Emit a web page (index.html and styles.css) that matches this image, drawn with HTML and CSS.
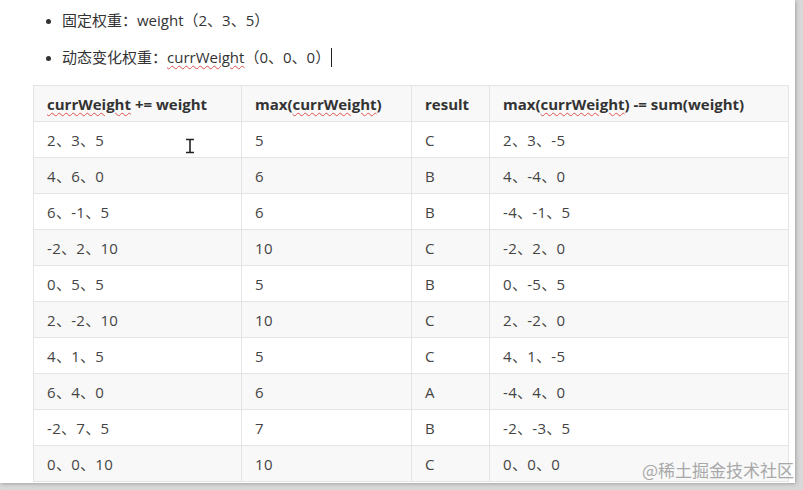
FILE: index.html
```html
<!DOCTYPE html>
<html>
<head>
<meta charset="utf-8">
<link rel="stylesheet" href="styles.css">
</head>
<body>
<div class="page">
  <ul class="list">
    <li>固定权重：weight（2、3、5）</li>
    <li>动态变化权重：<span class="sp">currWeight</span>（0、0、0）<span class="caret"></span></li>
  </ul>
  <table class="tbl">
    <thead>
      <tr><th class="c1"><span class="sp">currWeight</span> += weight</th><th class="c2">max(<span class="sp">currWeight</span>)</th><th class="c3">result</th><th class="c4">max(<span class="sp">currWeight</span>) -= sum(weight)</th></tr>
    </thead>
    <tbody>
      <tr><td>2、3、5</td><td>5</td><td>C</td><td>2、3、-5</td></tr>
      <tr><td>4、6、0</td><td>6</td><td>B</td><td>4、-4、0</td></tr>
      <tr><td>6、-1、5</td><td>6</td><td>B</td><td>-4、-1、5</td></tr>
      <tr><td>-2、2、10</td><td>10</td><td>C</td><td>-2、2、0</td></tr>
      <tr><td>0、5、5</td><td>5</td><td>B</td><td>0、-5、5</td></tr>
      <tr><td>2、-2、10</td><td>10</td><td>C</td><td>2、-2、0</td></tr>
      <tr><td>4、1、5</td><td>5</td><td>C</td><td>4、1、-5</td></tr>
      <tr><td>6、4、0</td><td>6</td><td>A</td><td>-4、4、0</td></tr>
      <tr><td>-2、7、5</td><td>7</td><td>B</td><td>-2、-3、5</td></tr>
      <tr><td>0、0、10</td><td>10</td><td>C</td><td>0、0、0</td></tr>
    </tbody>
  </table>
  <svg class="ibeam" width="10" height="16" viewBox="0 0 10 16"><path d="M1 1.5h8M5 1.5v13M1 14.5h8" stroke="#222" stroke-width="1.6" fill="none"/></svg>
  <div class="wm">@稀土掘金技术社区</div>
</div>
</body>
</html>
```
FILE: styles.css
```css
html, body { margin: 0; padding: 0; }
body {
  width: 803px;
  height: 490px;
  background: #d9d9d9;
  overflow: hidden;
  font-family: "Open Sans", "Noto Sans CJK SC", sans-serif;
  color: #333;
}
.page {
  position: relative;
  width: 795px;
  height: 483px;
  background: #fff;
  box-shadow: 1px 1px 4px rgba(0,0,0,0.25);
}
.list {
  margin: 0;
  padding: 9px 0 0 62px;
  font-size: 15px;
  list-style: disc;
}
.list li {
  height: 22px;
  line-height: 22px;
  margin-bottom: 15px;
}
.list li::marker { font-size: 13px; }
.sp {
  text-decoration: underline wavy #e05050;
  text-decoration-thickness: 1px;
  text-underline-offset: 2px;
}
.caret {
  display: inline-block;
  width: 1px;
  height: 19px;
  background: #222;
  margin-left: 1px;
  vertical-align: -4px;
}
.tbl {
  margin: 17px 0 0 33px;
  border-collapse: collapse;
  width: 755px;
  font-size: 15px;
  table-layout: fixed;
}
.tbl th, .tbl td {
  border: 1px solid #e4e4e4;
  height: 36px;
  padding: 0 0 0 13px;
  text-align: left;
  box-sizing: border-box;
}
.tbl th { font-weight: 700; background: #f8f8f8; }
.c1 { width: 208px; }
.c2 { width: 170px; }
.c3 { width: 78px; }
.c4 { width: 299px; }
.tbl tbody tr:nth-child(even) td { background: #f8f8f8; }
.tbl td { color: #444; letter-spacing: 0.3px; }
.ibeam { position: absolute; left: 185px; top: 138px; }
.wm {
  position: absolute;
  right: 1px;
  bottom: 1px;
  font-family: "Noto Sans CJK SC", sans-serif;
  font-size: 17px;
  color: #a8a8a8;
}
```
